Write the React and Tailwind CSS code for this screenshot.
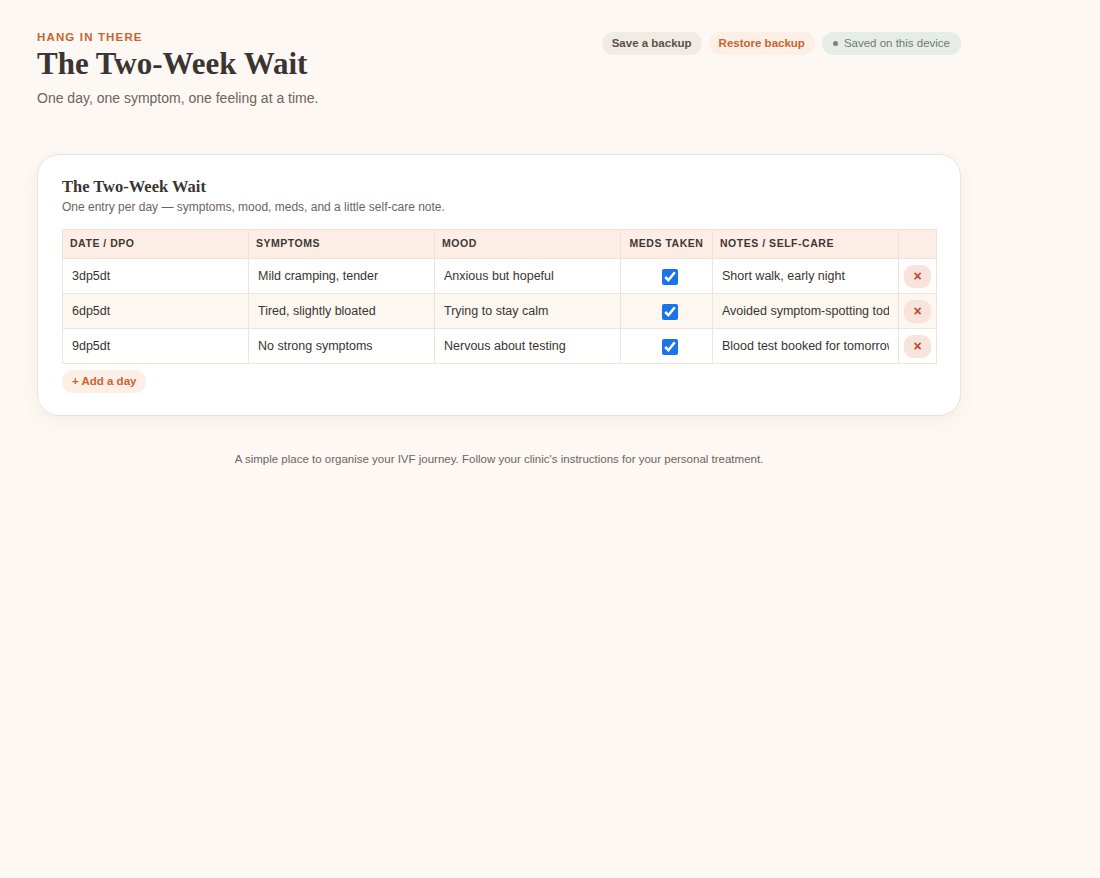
import React, { useState } from "react";

const sans = { fontFamily: '"Liberation Sans", Arial, sans-serif' };
const serif = { fontFamily: '"Liberation Serif", "Times New Roman", serif' };

const initialRows = [
  { id: 1, day: "3dp5dt", symptoms: "Mild cramping, tender", mood: "Anxious but hopeful", meds: true, notes: "Short walk, early night" },
  { id: 2, day: "6dp5dt", symptoms: "Tired, slightly bloated", mood: "Trying to stay calm", meds: true, notes: "Avoided symptom-spotting today" },
  { id: 3, day: "9dp5dt", symptoms: "No strong symptoms", mood: "Nervous about testing", meds: true, notes: "Blood test booked for tomorrow" },
];

function Cell({ value, onChange }) {
  return (
    <td className="border border-[#efe4dc] p-0">
      <input
        value={value}
        onChange={(e) => onChange(e.target.value)}
        className="block w-full bg-transparent px-[9px] py-[9px] text-[12.5px] leading-[16px] text-[#3a3430] outline-none"
        style={sans}
      />
    </td>
  );
}

export default function App() {
  const [rows, setRows] = useState(initialRows);

  const update = (id, key, val) =>
    setRows((rs) => rs.map((r) => (r.id === id ? { ...r, [key]: val } : r)));

  return (
    <div className="min-h-[878px] w-full bg-[#fdf8f3]" style={sans}>
      <div className="ml-[37px] w-[924px] pt-[30px]">
        <header className="flex items-start justify-between">
          <div>
            <div className="text-[11.5px] font-bold uppercase leading-[14px] tracking-[0.1em] text-[#c8642e]">
              Hang in there
            </div>
            <h1 className="text-[31px] font-bold leading-[40px] text-[#3a3532]" style={serif}>
              The Two-Week Wait
            </h1>
            <p className="mt-[4px] text-[14px] leading-[20px] text-[#6d645e]">
              One day, one symptom, one feeling at a time.
            </p>
          </div>
          <div className="flex items-center gap-[7px] pt-[2px]">
            <button className="h-[23px] rounded-full bg-[#f1ebe5] px-[10px] text-[11.5px] font-bold text-[#5a504a]">
              Save a backup
            </button>
            <button className="h-[23px] rounded-full bg-[#fdefe6] px-[10px] text-[11.5px] font-bold text-[#c8642e]">
              Restore backup
            </button>
            <span className="flex h-[23px] items-center gap-[6px] rounded-full bg-[#e6ede7] pl-[11px] pr-[11px] text-[11.5px] text-[#6f7a72]">
              <span className="h-[5px] w-[5px] rounded-full bg-[#7a857c]" />
              Saved on this device
            </span>
          </div>
        </header>

        <section className="mt-[46px] rounded-[22px] border border-[#ece2da] bg-white px-[24px] pb-[22px] pt-[22px] shadow-[0_6px_18px_rgba(120,90,60,0.06)]">
          <h2 className="text-[16.5px] font-bold leading-[20px] text-[#3a3532]" style={serif}>
            The Two-Week Wait
          </h2>
          <p className="mt-[2px] text-[12px] leading-[16px] text-[#6d645e]">
            One entry per day — symptoms, mood, meds, and a little self-care note.
          </p>

          <table className="mt-[14px] w-[874px] table-fixed border-collapse">
            <colgroup>
              <col className="w-[186px]" />
              <col className="w-[186px]" />
              <col className="w-[186px]" />
              <col className="w-[92px]" />
              <col className="w-[186px]" />
              <col className="w-[38px]" />
            </colgroup>
            <thead>
              <tr className="h-[29px] bg-[#fdeee5]">
                {["Date / DPO", "Symptoms", "Mood", "Meds taken", "Notes / self-care", ""].map((h, i) => (
                  <th
                    key={i}
                    className={`whitespace-nowrap border border-[#f1e2d8] px-[7px] text-[10.5px] font-bold uppercase tracking-[0.05em] text-[#3f3834] ${
                      i === 3 ? "text-center" : "text-left"
                    }`}
                  >
                    {h}
                  </th>
                ))}
              </tr>
            </thead>
            <tbody>
              {rows.map((r, idx) => (
                <tr key={r.id} className={`h-[35px] ${idx % 2 === 1 ? "bg-[#fdf7f1]" : "bg-white"}`}>
                  <Cell value={r.day} onChange={(v) => update(r.id, "day", v)} />
                  <Cell value={r.symptoms} onChange={(v) => update(r.id, "symptoms", v)} />
                  <Cell value={r.mood} onChange={(v) => update(r.id, "mood", v)} />
                  <td className="border border-[#efe4dc] p-0 pl-[6px] text-center align-middle">
                    <input
                      type="checkbox"
                      checked={r.meds}
                      onChange={(e) => update(r.id, "meds", e.target.checked)}
                      className="m-0 h-[16px] w-[16px] align-middle accent-[#1a73e8]"
                    />
                  </td>
                  <Cell value={r.notes} onChange={(v) => update(r.id, "notes", v)} />
                  <td className="border border-[#efe4dc] p-0 text-center align-middle">
                    <button
                      onClick={() => setRows((rs) => rs.filter((x) => x.id !== r.id))}
                      className="inline-flex h-[23px] w-[27px] items-center justify-center rounded-[9px] bg-[#f8e4dc] text-[14px] font-bold leading-none text-[#c0442a]"
                    >
                      ×
                    </button>
                  </td>
                </tr>
              ))}
            </tbody>
          </table>

          <button
            onClick={() =>
              setRows((rs) => [...rs, { id: Date.now(), day: "", symptoms: "", mood: "", meds: false, notes: "" }])
            }
            className="mt-[6px] h-[23px] rounded-full bg-[#fdefe6] px-[10px] text-[11.5px] font-bold text-[#c8642e]"
          >
            + Add a day
          </button>
        </section>

        <footer className="mt-[35px] text-center text-[11.5px] leading-[16px] text-[#6d645e]">
          A simple place to organise your IVF journey. Follow your clinic's instructions for your personal treatment.
        </footer>
      </div>
    </div>
  );
}
